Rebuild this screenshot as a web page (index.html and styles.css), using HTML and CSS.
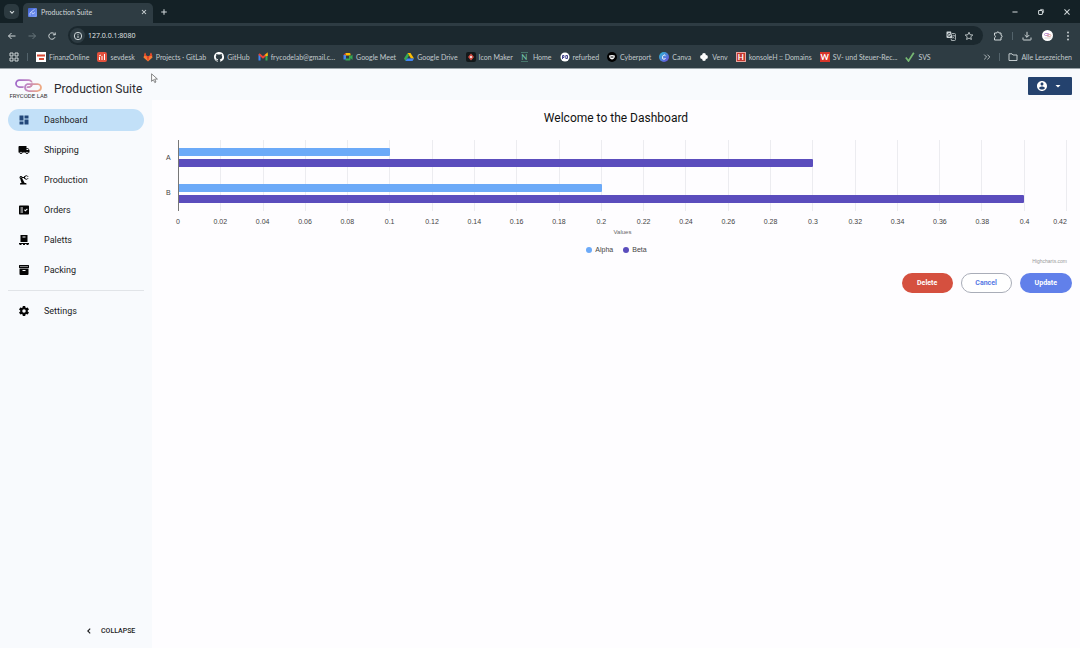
FILE: index.html
```html
<!DOCTYPE html>
<html lang="en">
<head>
<meta charset="utf-8">
<title>Production Suite</title>
<link rel="stylesheet" href="styles.css">
</head>
<body>
<header class="browser">
  <div class="tabstrip">
    <button class="tab-search" aria-label="Search tabs"><svg class="ico-8" viewBox="0 0 10 10"><path class="line-thick" d="M2.5 4 5 6.5 7.5 4"/></svg></button>
    <div class="tab">
      <svg class="ico-9" viewBox="0 0 18 18"><defs><linearGradient id="tabg" x2="1" y2="1"><stop stop-color="#3f60d0"/><stop offset="1" stop-color="#7fa0fa"/></linearGradient></defs><rect width="18" height="18" rx="2" fill="url(#tabg)"/><path d="M13 3 7 7l2 5 5-3M7 7l-3 3v5" fill="none" stroke="#c5d5ff" stroke-width="1.8"/></svg>
      <span class="tab-title">Production Suite</span>
      <button class="plain" aria-label="Close tab"><svg class="ico-8" viewBox="0 0 10 10"><path class="line-thick" d="m2.5 2.5 5 5m0-5-5 5"/></svg></button>
    </div>
    <button class="plain new-tab" aria-label="New tab"><svg class="ico-8" viewBox="0 0 10 10"><path class="line-thick" d="M5 1.5v7M1.5 5h7"/></svg></button>
    <div class="window-buttons">
      <button class="plain" aria-label="Minimize"><svg class="ico-8" viewBox="0 0 10 10"><path class="line-thick" d="M1.8 5h6.4"/></svg></button>
      <button class="plain" aria-label="Restore"><svg class="ico-8" viewBox="0 0 10 10"><rect class="line-thick" x="2" y="3.2" width="4.8" height="4.8" rx="1"/><path class="line" d="M4 1.8h3.2q1 0 1 1V6"/></svg></button>
      <button class="plain" aria-label="Close"><svg class="ico-8" viewBox="0 0 10 10"><path class="line-thick" d="m1.8 1.8 6.4 6.4m0-6.4L1.8 8.200"/></svg></button>
    </div>
  </div>
  <div class="toolbar">
    <div class="nav-buttons">
      <button class="plain" aria-label="Back"><svg class="ico-10" viewBox="0 0 10 10"><path class="line" d="M8.500 5h-7M4.500 2l-3 3 3 3"/></svg></button>
      <button class="plain dim" aria-label="Forward"><svg class="ico-10" viewBox="0 0 10 10"><path class="line" d="M1.500 5h7M5.500 2l3 3-3 3"/></svg></button>
      <button class="plain" aria-label="Reload"><svg class="ico-10" viewBox="0 0 10 10"><path class="line" d="M8 6.200A3.200 3.200 0 1 1 7.500 3L8.200 3.700M8.200 1.500v2.300H5.900"/></svg></button>
    </div>
    <div class="omnibox">
      <span class="site-info"><svg class="ico-10" viewBox="0 0 10 10"><circle class="line" cx="5" cy="5" r="3.700"/><path class="line" d="M5 4.600V7M5 2.800v1"/></svg></span>
      <input class="url" type="text" aria-label="Address" value="127.0.0.1:8080">
      <button class="plain" aria-label="Translate"><svg class="ico-10" viewBox="0 0 20 20"><path d="M2 1h8l3 13H3q-2 0-2-2V2q0-1 1-1z" fill="#ccd3d6"/><path d="M12 5h5q2 0 2 2v10q0 2-2 2h-6l-1-4" fill="none" stroke="#ccd3d6" stroke-width="1.500"/><path d="M8.500 5.500a3 3 0 1 0 1 3H7" fill="none" stroke="#1b282e" stroke-width="1.500"/><path d="M12.500 9H18m-3-1.500V9m2 0q-1 4-4 6m0-4q1 3 4 4" fill="none" stroke="#ccd3d6"/></svg></button>
      <button class="plain" aria-label="Bookmark"><svg class="ico-10" viewBox="0 0 24 24"><path d="m12 3 2.700 6 6.500.6-4.900 4.300 1.400 6.400-5.700-3.300-5.700 3.300 1.400-6.400-4.900-4.300 6.500-.6z" fill="none" stroke="#d0d7d9" stroke-width="2"/></svg></button>
    </div>
    <div class="tools">
      <button class="plain" aria-label="Extensions"><svg class="ico-10" viewBox="0 0 20 20"><path d="M3 4h4.500a2.200 2.200 0 0 1 4.400 0H16v4.500a2.200 2.200 0 0 1 0 4.400V18H3v-4.500a2.600 2.600 0 0 0 0-5z" fill="none" stroke="#d0d7d9" stroke-width="2"/></svg></button>
      <span class="rule"></span>
      <button class="plain" aria-label="Downloads"><svg class="ico-10" viewBox="0 0 10 10"><path class="line" d="M5 .8v5.400M2.700 4 5 6.300 7.300 4M1 6.500v2q0 .5.500.5h7q.5 0 .5-.5v-2"/></svg></button>
      <button class="avatar" aria-label="Profile"><svg class="ico-10" viewBox="0 0 20 20"><rect x="3" y="5" width="9" height="4" rx="2" fill="none" stroke="#a46fc0" stroke-width="1.500"/><rect x="8" y="7" width="8" height="4" rx="2" fill="none" stroke="#d99a91" stroke-width="1.500"/><path d="M3 14h14" stroke="#999"/></svg></button>
      <button class="plain" aria-label="Menu"><svg class="ico-10" viewBox="0 0 10 10"><g fill="#d0d7d9"><circle cx="5" cy="1.500" r=".9"/><circle cx="5" cy="5" r=".9"/><circle cx="5" cy="8.500" r=".9"/></g></svg></button>
    </div>
  </div>
  <nav class="bookmarks" aria-label="Bookmarks">
    <button class="plain" aria-label="Apps"><svg class="ico-10" viewBox="0 0 10 10"><path class="line" d="M1 1h3v3H1zm5 0h3v3H6zM1 6h3v3H1zm5 0h3v3H6z"/></svg></button>
    <span class="rule"></span>
    <a class="bm" href="#"><svg class="ico-10" viewBox="0 0 10 10"><path fill="#fff" d="M0 0h10v10H0z"/><path d="M1 2.500h8v2H1zm2 3.500h5v2H3z" fill="#d94a35"/></svg>FinanzOnline</a>
    <a class="bm" href="#"><svg class="ico-10" viewBox="0 0 10 10"><rect width="10" height="10" rx="2" fill="#e4513d"/><path d="M2.500 8V5m2.500 3V4m2.500 4V2M2 4l2-1" stroke="#fff"/></svg>sevdesk</a>
    <a class="bm" href="#"><svg class="ico-10" viewBox="0 0 20 20"><path d="M4 1 1 11l9 8 9-8-3-10-3 7H7z" fill="#f47c35"/><path d="M7 8h6l-3 11zM4 1l3 7H2zM16 1l3 7h-6z" fill="#e24329"/></svg>Projects · GitLab</a>
    <a class="bm" href="#"><svg class="ico-10" viewBox="0 0 16 16"><path fill="#fff" d="M8 0C3.580 0 0 3.580 0 8c0 3.540 2.290 6.530 5.470 7.590.4.070.55-.17.55-.38v-1.490c-2.010.37-2.530-.49-2.690-.94-.09-.23-.48-.94-.82-1.130-.28-.15-.68-.52-.01-.53.630-.01 1.080.58 1.230.82.72 1.210 1.870.87 2.330.66.07-.52.28-.87.51-1.070-1.780-.2-3.640-.89-3.640-3.950 0-.87.31-1.590.82-2.150-.08-.2-.36-1.020.08-2.120 0 0 .67-.21 2.200.82a7.600 7.600 0 0 1 4 0c1.530-1.040 2.200-.82 2.200-.82.44 1.100.16 1.920.08 2.120.51.56.82 1.270.82 2.150 0 3.070-1.870 3.750-3.650 3.950.29.25.54.73.54 1.480v2.200c0 .21.15.46.55.38A8 8 0 0 0 8 0z"/></svg>GitHub</a>
    <a class="bm" href="#"><svg class="ico-10" viewBox="0 0 20 20"><path d="M3 17V5" stroke="#4285f4" stroke-width="4"/><path d="M17 17V5" stroke="#34a853" stroke-width="4"/><path d="m2 4 8 7 8-7" fill="none" stroke="#ea4335" stroke-width="4"/><path d="m15 7 3-3v4" stroke="#fbbc04" stroke-width="3"/></svg>frycodelab@gmail.c...</a>
    <a class="bm" href="#"><svg class="ico-10" viewBox="0 0 20 20"><path d="M1 6h5v9H1z" fill="#4285f4"/><path d="M5 2h8q2 0 2 2v3H5z" fill="#fbbc04"/><path d="M5 13h7V7h3v8q0 2-2 2H5zM15 9l4-4v11l-4-4z" fill="#34a853"/><path d="m1 6 4-4v4z" fill="#ea4335"/></svg>Google Meet</a>
    <a class="bm" href="#"><svg class="ico-10" viewBox="0 0 20 20"><path d="M7 2h6l7 11h-6z" fill="#fbbc04"/><path d="M7 2 0 13l3 5 7-11z" fill="#34a853"/><path d="M6 13h14l-3 5H3z" fill="#4285f4"/></svg>Google Drive</a>
    <a class="bm" href="#"><svg class="ico-10" viewBox="0 0 10 10"><rect width="10" height="10" rx="2" fill="#12181a"/><path d="m5 1.500 3 3.500-3 3.500L2 5z" fill="#cf4c43"/><circle cx="5" cy="5" r="1" fill="#fff"/></svg>Icon Maker</a>
    <a class="bm" href="#"><span class="letter letter-n">N</span>Home</a>
    <a class="bm" href="#"><svg class="ico-10" viewBox="0 0 10 10"><circle cx="5" cy="5" r="4.500" fill="#fff"/><path d="M2.500 7V3.500H4v2H2.500M5.800 3.500v3h1.700v-3z" fill="none" stroke="#43458c"/></svg>refurbed</a>
    <a class="bm" href="#"><svg class="ico-10" viewBox="0 0 10 10"><circle cx="5" cy="5" r="5" fill="#000"/><path d="M2.200 3.500q2.800-1 5.600 0 .3 3-2.800 4-3.100-1-2.800-4z" fill="#fff"/><path d="M3.500 5h3" stroke="#000"/></svg>Cyberport</a>
    <a class="bm" href="#"><svg class="ico-10" viewBox="0 0 10 10"><defs><linearGradient id="cv" x2="1" y2="1"><stop stop-color="#29bfd2"/><stop offset="1" stop-color="#6f45df"/></linearGradient></defs><circle cx="5" cy="5" r="5" fill="url(#cv)"/><path d="M6.500 3.700Q5 1.500 3.600 4.300 3 7.700 5 7.300q1.100-.3 1.700-1.300" fill="none" stroke="#fff" stroke-width=".9"/></svg>Canva</a>
    <a class="bm" href="#"><svg class="ico-10" viewBox="0 0 10 10"><g fill="#fff"><circle cx="5" cy="3" r="1.900"/><circle cx="5" cy="7" r="1.900"/><circle cx="3" cy="5" r="1.900"/><circle cx="7" cy="5" r="1.900"/></g></svg>Venv</a>
    <a class="bm" href="#"><span class="letter letter-h">H</span>konsoleH :: Domains</a>
    <a class="bm" href="#"><span class="letter letter-w">W</span>SV- und Steuer-Rec...</a>
    <a class="bm" href="#"><svg class="ico-10" viewBox="0 0 10 10"><path d="m.8 5.500 2.700 3.500L8.800.8" fill="none" stroke="#76b873" stroke-width="1.700"/></svg>SVS</a>
    <button class="plain more" aria-label="More bookmarks"><svg class="ico-8" viewBox="0 0 10 10"><path class="line" d="m1.500 2 3 3-3 3m4-6 3 3-3 3"/></svg></button>
    <span class="rule"></span>
    <a class="bm" href="#"><svg class="ico-10" viewBox="0 0 10 10"><path class="line" d="M1 1.800h3l1 1.200h4v5.500H1z"/></svg>Alle Lesezeichen</a>
  </nav>
</header>

<div class="app">
  <aside class="sidebar">
    <a class="brand" href="#">
      <span class="logo">
        <svg class="logo-mark" viewBox="0 0 54 26"><defs><linearGradient id="lg" gradientUnits="userSpaceOnUse" x1="0" y1="0" x2="52" y2="16"><stop stop-color="#9a62c9"/><stop offset=".5" stop-color="#c187c3"/><stop offset="1" stop-color="#efaa82"/></linearGradient></defs><g fill="none" stroke-width="3.500"><rect x="2" y="2" width="32" height="14" rx="7" stroke="url(#lg)"/><path d="M25 10h20q7 1 7 7t-7 7H27q-7-1-7-7 0-4 4-6" stroke="#f8fafd" stroke-width="6"/><path d="M28 10h17q7 1 7 7t-7 7H27q-7-1-7-7 0-5 5-7h3" stroke="url(#lg)"/><path d="M27 16q7 0 7-7" stroke="url(#lg)"/></g></svg>
        <span class="logo-text">FRYCODE LAB</span>
      </span>
      <span class="brand-name">Production Suite</span>
    </a>
    <nav class="menu" aria-label="Main">
      <a class="item active" href="#"><svg class="ico-12" viewBox="0 0 24 24"><path d="M13 3v6h8V3m-8 18h8V11h-8M3 21h8v-6H3m0-2h8V3H3z"/></svg>Dashboard</a>
      <a class="item" href="#"><svg class="ico-12" viewBox="0 0 24 24"><path d="M20 8h-3V4H3c-1.100 0-2 .9-2 2v11h2c0 1.660 1.340 3 3 3s3-1.340 3-3h6c0 1.660 1.340 3 3 3s3-1.340 3-3h2v-5zM6 18.500c-.83 0-1.500-.67-1.500-1.500s.67-1.500 1.500-1.500 1.500.67 1.500 1.500-.67 1.500-1.500 1.500zm13.500-9 1.960 2.500H17V9.500zm-1.500 9c-.83 0-1.500-.67-1.500-1.500s.67-1.500 1.500-1.500 1.500.67 1.500 1.500-.67 1.500-1.500 1.500z"/></svg>Shipping</a>
      <a class="item" href="#"><svg class="ico-12" viewBox="0 0 24 24"><path d="M19.930 8.350l-3.600 1.680L14 7.700V6.300l2.330-2.330 3.600 1.680c.38.18.82.01 1-.36.18-.38.01-.82-.36-1l-3.920-1.830c-.38-.18-.83-.1-1.130.2L13.780 4.400c-.18-.24-.46-.4-.78-.4-.55 0-1 .45-1 1v1H8.820C8.400 4.840 7.300 4 6 4 4.340 4 3 5.340 3 7c0 1.100.6 2.050 1.480 2.580L7.080 18H6c-1.100 0-2 .9-2 2v1h13v-1c0-1.100-.9-2-2-2h-1.620L8.410 8.770c.17-.24.31-.49.41-.77H12v1c0 .55.45 1 1 1 .32 0 .6-.16.78-.4l1.740 1.740c.3.3.75.38 1.130.2l3.920-1.830c.38-.18.54-.62.36-1-.18-.37-.62-.54-1-.36zM6 8c-.55 0-1-.45-1-1s.45-1 1-1 1 .45 1 1-.45 1-1 1z"/></svg>Production</a>
      <a class="item" href="#"><svg class="ico-12" viewBox="0 0 24 24"><path fill-rule="evenodd" d="M20 3H4c-1.100 0-2 .9-2 2v14c0 1.100.9 2 2 2h16c1.100 0 2-.9 2-2V5c0-1.100-.9-2-2-2zM10 17H5v-2h5zm0-4H5v-2h5zm0-4H5V7h5zm4.820 6L12 12.160l1.410-1.410 1.410 1.420L17.990 9l1.420 1.420z"/></svg>Orders</a>
      <a class="item" href="#"><svg class="ico-12" viewBox="0 0 24 24"><path fill-rule="evenodd" d="M5 2h14v14H5zm4 3v2h6V5zM2 18h20v2h-1v2h-4v-2h-3v2h-4v-2H7v2H3v-2H2z"/></svg>Paletts</a>
      <a class="item" href="#"><svg class="ico-12" viewBox="0 0 24 24"><path fill-rule="evenodd" d="M3 2h18q1 0 1 1v4q0 1-1 1H3Q2 8 2 7V3q0-1 1-1zM3 9h18v11q0 2-2 2H5q-2 0-2-2zm6 3v2h6v-2z"/><path d="M4 5h16" stroke="#f8fafd" stroke-width="1"/></svg>Packing</a>
      <hr class="divider">
      <a class="item" href="#"><svg class="ico-12" viewBox="0 0 24 24"><path d="M12 15.500A3.500 3.500 0 0 1 8.500 12 3.500 3.500 0 0 1 12 8.500a3.500 3.500 0 0 1 3.500 3.500 3.500 3.500 0 0 1-3.500 3.500m7.430-2.530c.04-.32.07-.64.07-.97s-.03-.66-.07-1l2.110-1.630c.19-.15.24-.42.12-.64l-2-3.460c-.12-.22-.39-.31-.61-.22l-2.490 1c-.52-.39-1.060-.73-1.690-.98l-.37-2.650A.506.506 0 0 0 14 2h-4c-.25 0-.46.18-.5.42l-.37 2.650c-.63.25-1.170.59-1.690.98l-2.490-1c-.22-.09-.49 0-.61.22l-2 3.460c-.13.22-.07.49.12.64L4.570 11c-.04.34-.07.67-.07 1s.03.65.07.97l-2.110 1.660c-.19.15-.25.42-.12.64l2 3.460c.12.22.39.3.61.22l2.490-1.010c.52.4 1.060.74 1.690.99l.37 2.650c.04.24.25.42.5.42h4c.25 0 .46-.18.5-.42l.37-2.650c.63-.26 1.170-.59 1.690-.99l2.490 1.010c.22.08.49 0 .61-.22l2-3.460c.12-.22.07-.49-.12-.64z"/></svg>Settings</a>
    </nav>
    <button class="collapse"><svg class="ico-8" viewBox="0 0 10 10"><path d="M6.500 2 3.500 5l3 3" fill="none" stroke="currentColor" stroke-width="1.400"/></svg>COLLAPSE</button>
  </aside>
  <div class="content">
    <header class="topbar">
      <button class="account" aria-label="Account"><svg class="ico-12" viewBox="0 0 24 24"><path d="M12 2C6.480 2 2 6.480 2 12s4.480 10 10 10 10-4.480 10-10S17.520 2 12 2zm0 3c1.660 0 3 1.340 3 3s-1.340 3-3 3-3-1.340-3-3 1.340-3 3-3zm0 14.200c-2.500 0-4.710-1.280-6-3.220.03-1.990 4-3.080 6-3.080 1.990 0 5.970 1.090 6 3.080-1.290 1.940-3.500 3.220-6 3.220z"/></svg><svg class="ico-12" viewBox="0 0 24 24"><path d="m7 10 5 5 5-5z"/></svg></button>
    </header>
    <main class="page">
      <h1 class="title">Welcome to the Dashboard</h1>
      <figure class="chart">
        <div class="categories"><span>A</span><span>B</span></div>
        <div class="plot">
          <div class="grid"><i></i><i></i><i></i><i></i><i></i><i></i><i></i><i></i><i></i><i></i><i></i><i></i><i></i><i></i><i></i><i></i><i></i><i></i><i></i><i></i><i></i></div>
          <div class="group"><div class="bar alpha" style="width:23.8%"></div><div class="bar beta" style="width:71.4%"></div></div>
          <div class="group"><div class="bar alpha" style="width:47.6%"></div><div class="bar beta" style="width:95.2%"></div></div>
        </div>
        <div class="ticks"><span>0</span><span>0.02</span><span>0.04</span><span>0.06</span><span>0.08</span><span>0.1</span><span>0.12</span><span>0.14</span><span>0.16</span><span>0.18</span><span>0.2</span><span>0.22</span><span>0.24</span><span>0.26</span><span>0.28</span><span>0.3</span><span>0.32</span><span>0.34</span><span>0.36</span><span>0.38</span><span>0.4</span><span>0.42</span></div>
        <div class="axis-title">Values</div>
        <div class="legend"><span class="key"><i class="dot alpha"></i>Alpha</span><span class="key"><i class="dot beta"></i>Beta</span></div>
        <a class="credit" href="#">Highcharts.com</a>
      </figure>
      <div class="actions">
        <button class="btn danger">Delete</button>
        <button class="btn outline">Cancel</button>
        <button class="btn primary">Update</button>
      </div>
    </main>
  </div>
</div>
<svg class="pointer" viewBox="0 0 12 18"><path d="M1 1v13l3-3 2.500 5 2-1L6.300 10H11z" fill="#fff" stroke="#555" stroke-width="1.200"/></svg>
</body>
</html>
```
FILE: styles.css
```css
* { box-sizing: border-box; }
body {
  margin: 0;
  min-height: 100vh;
  display: flex;
  flex-direction: column;
  background: #fefdff;
  color: #1c1c1e;
  font-family: Roboto, "Liberation Sans", sans-serif;
}
button, input { font: inherit; color: inherit; }
button { padding: 0; border: 0; background: none; display: flex; align-items: center; justify-content: center; }
a { color: inherit; text-decoration: none; }
svg { display: block; flex: none; fill: currentColor; }
.ico-8 { width: 8px; height: 8px; }
.ico-9 { width: 9px; height: 9px; }
.ico-10 { width: 10px; height: 10px; }
.ico-12 { width: 12px; height: 12px; }
.line { fill: none; stroke: currentColor; stroke-width: 1; }
.line-thick { fill: none; stroke: currentColor; stroke-width: 1.3; }

/* Browser frame */
.browser {
  background: #2e3c43;
  color: #d0d7d9;
  font-family: Lato, "Open Sans", sans-serif;
  font-size: 7px;
  line-height: 10px;
  border-bottom: 1px solid #99a2a7;
}
.tabstrip { display: flex; align-items: center; height: 23px; padding: 0 9px 0 4px; background: #142126; }
.tab-search { width: 15px; height: 15px; border-radius: 5px; background: #2c3a40; }
.tab {
  display: flex; align-items: center; gap: 4px;
  align-self: flex-end;
  width: 130px; height: 20px; margin-left: 4px; padding: 0 5px 2px;
  background: #2e3c43; border-radius: 5px 5px 0 0;
}
.tab-title { flex: 1; }
.new-tab { margin-left: 7px; }
.window-buttons { display: flex; gap: 18px; margin-left: auto; }
.toolbar { display: flex; align-items: center; height: 25px; padding: 0 7px; }
.nav-buttons { display: flex; gap: 10px; }
.dim { color: #68767c; }
.omnibox {
  flex: 1; display: flex; align-items: center; gap: 8px;
  height: 19px; margin-left: 11px; padding: 0 9px 0 2px;
  border-radius: 10px; background: #1b282e;
}
.site-info { display: grid; place-items: center; width: 15px; height: 15px; border-radius: 50%; background: #2e3c43; }
.url { flex: 1; min-width: 0; padding: 0; margin-left: -5px; border: 0; background: none; color: #e3e8ea; outline: 0; font-family: "Open Sans", "Noto Sans", sans-serif; }
.tools { display: flex; align-items: center; gap: 10px; margin-left: 10px; }
.rule { width: 1px; height: 8px; background: #53636b; }
.tools .rule { margin: 0 -1px; }
.avatar { width: 11px; height: 11px; border-radius: 50%; background: #fff; }
.bookmarks { display: flex; align-items: center; gap: 8px; height: 20px; padding: 0 8px 3px 9px; }
.bm { display: flex; align-items: center; gap: 3px; white-space: nowrap; color: #c3cbce; }
.more { margin-left: auto; }
.letter { width: 10px; height: 10px; color: #fff; font-size: 8px; font-weight: 700; text-align: center; }
.letter-n { width: 7px; margin-right: 2px; color: #6ec0a8; font-weight: 400; border-block: 1px solid #47756b; line-height: 8px; }
.letter-h { background: #c4382e; border: 1px solid #e8a39d; line-height: 8px; }
.letter-w { background: #d7352a; }

/* Application */
.app { flex: 1; display: grid; grid-template-columns: 152px 1fr; }
.sidebar { display: flex; flex-direction: column; background: #f8fafd; padding: 9px 8px 12px; }
.brand { display: flex; align-items: center; gap: 7px; height: 22px; padding-left: 2px; white-space: nowrap; }
.logo { display: flex; flex-direction: column; align-items: center; width: 37px; }
.logo-mark { width: 27px; height: 13px; }
.logo-text { font-size: 6px; line-height: 7px; color: #333; }
.brand-name { font-size: 12px; color: #2b2b2e; }
.menu { display: flex; flex-direction: column; gap: 8px; margin-top: 9px; font-size: 9px; }
.item { display: flex; align-items: center; gap: 14px; height: 22px; padding-left: 10px; border-radius: 11px; }
.item svg { color: #050505; }
.active { background: #c2e0f8; }
.active svg { color: #24487a; }
.divider { width: 100%; margin: 1px 0; border: 0; border-top: 1px solid #e1e4e8; }
.collapse { gap: 8px; margin-top: auto; margin-left: 77px; align-self: flex-start; font-size: 7px; line-height: 10px; font-weight: 500; }
.content { display: flex; flex-direction: column; min-width: 0; }
.topbar { display: flex; align-items: center; justify-content: flex-end; height: 31px; padding: 3px 8px 0; background: #f8fafd; }
.account { gap: 4px; width: 44px; height: 18px; border-radius: 1px; background: #24426e; color: #fff; }
.page { padding: 10px 8px 16px; }
.title { margin: 0; font-size: 12px; line-height: 16px; font-weight: 400; text-align: center; color: #111; }
.chart {
  display: grid; grid-template-columns: 18px 1fr;
  margin: 14px 5px 0 0;
  font-family: "Liberation Sans", Arial, sans-serif;
  font-size: 7px; line-height: 8px; color: #444;
}
.categories { display: grid; grid-template-rows: 1fr 1fr; align-items: center; padding-left: 6px; }
.plot { position: relative; display: flex; flex-direction: column; gap: 17px; padding: 8px 0; border-left: 1px solid #777; }
.grid { position: absolute; inset: 0; display: flex; }
.grid i { flex: 1; border-right: 1px solid #ececf0; }
.group { position: relative; display: flex; flex-direction: column; gap: 3px; }
.bar { height: 8px; border-radius: 0 1px 1px 0; }
.alpha { background: #6caaf8; }
.beta { background: #5b4dbd; }
.ticks { grid-column: 2; display: flex; justify-content: space-between; margin-top: 7px; }
.ticks span { width: 0; display: flex; justify-content: center; }
.ticks span:last-child { justify-content: flex-end; }
.axis-title { grid-column: 2; margin-top: 2px; text-align: center; color: #666; font-size: 6px; }
.legend { grid-column: 1 / -1; display: flex; justify-content: center; gap: 10px; margin-top: 10px; padding-left: 6px; }
.key { display: flex; align-items: center; gap: 3px; }
.dot { width: 6px; height: 6px; border-radius: 50%; }
.credit { grid-column: 2; justify-self: end; margin-top: 3px; font-size: 5px; color: #999; }
.actions { display: flex; justify-content: flex-end; gap: 8px; margin-top: 8px; }
.btn { height: 20px; min-width: 51px; padding: 0 15px; border-radius: 10px; font-size: 7px; font-weight: 700; color: #fff; }
.danger { background: #d5503f; }
.primary { background: #6180ea; }
.outline { padding: 0 13px; background: #fff; border: 1px solid #a9adb8; color: #5678e4; }
.pointer { position: absolute; left: 151px; top: 73px; width: 7px; height: 11px; }
```
